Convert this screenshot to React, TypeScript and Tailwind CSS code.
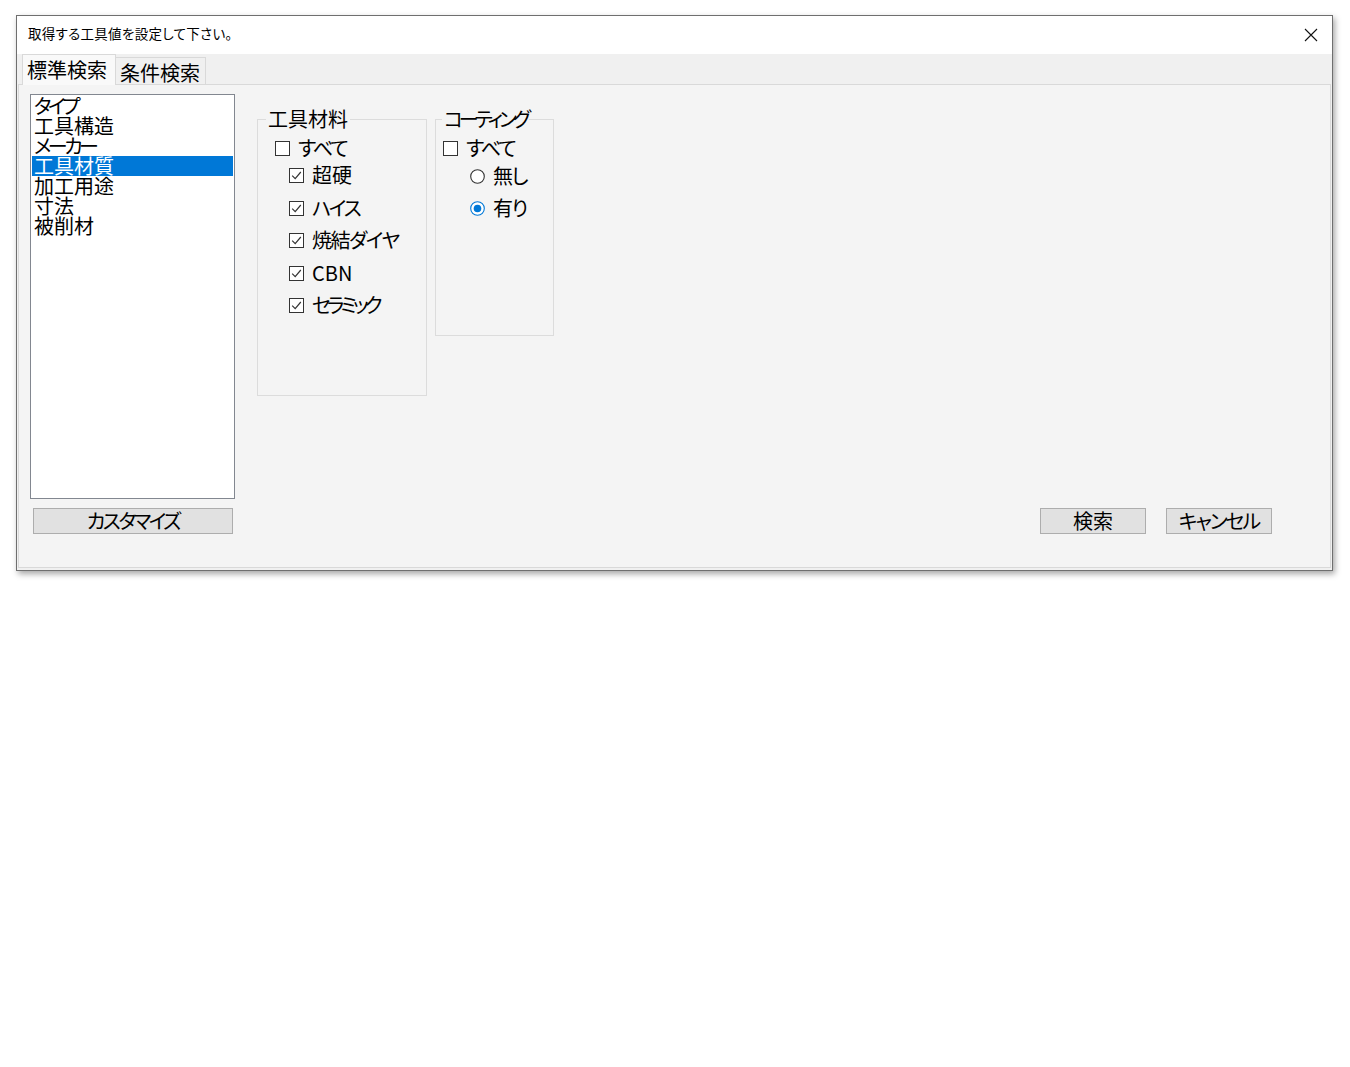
import React from 'react';

const jp = "font-['Noto_Sans_CJK_JP','Noto_Sans',sans-serif] [font-feature-settings:'palt']";

function CheckBox({
  checked,
  label,
  className = '',
  tight = '',
}: {
  checked: boolean;
  label: string;
  className?: string;
  tight?: string;
}) {
  return (
    <div className={`flex h-[20px] items-center ${className}`}>
      <svg width="15" height="15" viewBox="0 0 15 15" className="shrink-0">
        <rect x="0.5" y="0.5" width="14" height="14" fill="#fff" stroke="#333" />
        {checked && <path d="M3.2 7.6 L6.2 10.6 L11.8 4" fill="none" stroke="#333" strokeWidth="1.2" />}
      </svg>
      <span className={`ml-[8px] whitespace-nowrap text-[20px] leading-[20px] text-black ${tight}`}>{label}</span>
    </div>
  );
}

function Radio({ checked, label, className = '' }: { checked: boolean; label: string; className?: string }) {
  return (
    <div className={`flex h-[20px] items-center ${className}`}>
      <svg width="15" height="15" viewBox="0 0 15 15" className="shrink-0">
        <circle cx="7.5" cy="7.5" r="6.8" fill="#fff" stroke={checked ? '#0078d7' : '#333'} strokeWidth="1.1" />
        {checked && <circle cx="7.5" cy="7.5" r="3.8" fill="#0078d7" />}
      </svg>
      <span className="ml-[8px] whitespace-nowrap text-[20px] leading-[20px] tracking-[-1.5px] text-black">{label}</span>
    </div>
  );
}

function Button({ label, className = '' }: { label: string; className?: string }) {
  return (
    <button
      type="button"
      className={`h-[26px] whitespace-nowrap border border-[#adadad] bg-[#e1e1e1] text-[20px] leading-[22px] text-black ${className}`}
    >
      {label}
    </button>
  );
}

const items: { label: string; tight: string }[] = [
  { label: 'タイプ', tight: 'tracking-[-3.5px]' },
  { label: '工具構造', tight: '' },
  { label: 'メーカー', tight: 'tracking-[-3.5px]' },
  { label: '工具材質', tight: '' },
  { label: '加工用途', tight: '' },
  { label: '寸法', tight: '' },
  { label: '被削材', tight: '' },
];

export default function App() {
  return (
    <div className={`min-h-[1067px] bg-white pl-[16px] pt-[15px] ${jp}`}>
      <div className="flex h-[556px] w-[1317px] flex-col border border-[#6f6f6f] bg-[#f0f0f0] shadow-[2px_3px_6px_rgba(0,0,0,0.35)]">
        {/* title bar */}
        <div className="flex h-[38px] items-center justify-between bg-white pl-[11px] pr-[14px]">
          <span className="pb-[3px] text-[13.5px] tracking-[0.3px] text-black">取得する工具値を設定して下さい。</span>
          <svg width="14" height="14" viewBox="0 0 14 14">
            <path d="M1 1 L13 13 M13 1 L1 13" stroke="#111" strokeWidth="1.1" />
          </svg>
        </div>

        {/* tabs */}
        <div className="flex h-[30px] items-end pl-[5px]">
          <div className="relative z-10 -mb-px flex h-[31px] w-[94px] items-center border border-b-0 border-[#d9d9d9] bg-[#f9f9f9] pl-[4px] text-[20px] leading-[20px] text-black">
            標準検索
          </div>
          <div className="flex h-[27px] w-[90px] items-center border border-b-0 border-l-0 border-[#d9d9d9] bg-[#f0f0f0] pl-[4px] pt-[3px] text-[20px] leading-[20px] text-black">
            条件検索
          </div>
        </div>

        {/* panel */}
        <div className="mx-[1px] mb-[2px] flex flex-1 items-start border border-[#d9d9d9] bg-[#f4f4f4] pl-[11px] pr-[58px] pt-[9px]">
          <div className="flex w-[205px] flex-col">
            <div className="h-[405px] border border-[#828790] bg-white p-[1px]">
              {items.map((it) => (
                <div
                  key={it.label}
                  className={`h-[20px] whitespace-nowrap pl-[2px] text-[20px] leading-[20px] ${it.tight} ${
                    it.label === '工具材質' ? 'bg-[#0078d7] text-white' : 'text-black'
                  }`}
                >
                  {it.label}
                </div>
              ))}
            </div>
            <Button label="カスタマイズ" className="ml-[3px] mt-[9px] w-[200px] tracking-[-2.5px]" />
          </div>

          <div className="flex h-[440px] flex-1 flex-col">
            <div className="flex items-start pl-[22px] pt-[15px]">
              <fieldset className="h-[287px] w-[170px] border border-[#dcdcdc]">
                <legend className="ml-[8px] px-[2px] text-[20px] leading-[20px] text-black">工具材料</legend>
                <div className="flex flex-col items-start pl-[17px]">
                  <CheckBox checked={false} label="すべて" className="mt-[9px]" tight="tracking-[-2px]" />
                  <CheckBox checked label="超硬" className="ml-[14px] mt-[7px]" />
                  <CheckBox checked label="ハイス" className="ml-[14px] mt-[13px]" tight="tracking-[-2px]" />
                  <CheckBox checked label="焼結ダイヤ" className="ml-[14px] mt-[12px]" tight="tracking-[-1.5px]" />
                  <CheckBox checked label="CBN" className="ml-[14px] mt-[13px]" />
                  <CheckBox checked label="セラミック" className="ml-[14px] mt-[12px]" tight="tracking-[-4px]" />
                </div>
              </fieldset>
              <fieldset className="ml-[8px] h-[227px] w-[119px] border border-[#dcdcdc]">
                <legend className="ml-[6px] whitespace-nowrap px-[2px] text-[20px] leading-[20px] tracking-[-4px] text-black">
                  コーティング
                </legend>
                <div className="flex flex-col items-start pl-[7px]">
                  <CheckBox checked={false} label="すべて" className="mt-[9px]" tight="tracking-[-2px]" />
                  <Radio checked={false} label="無し" className="ml-[27px] mt-[8px]" />
                  <Radio checked label="有り" className="ml-[27px] mt-[12px]" />
                </div>
              </fieldset>
            </div>
            <div className="mt-auto flex justify-end gap-[20px]">
              <Button label="検索" className="w-[106px]" />
              <Button label="キャンセル" className="w-[106px] tracking-[-2px]" />
            </div>
          </div>
        </div>
      </div>
    </div>
  );
}
